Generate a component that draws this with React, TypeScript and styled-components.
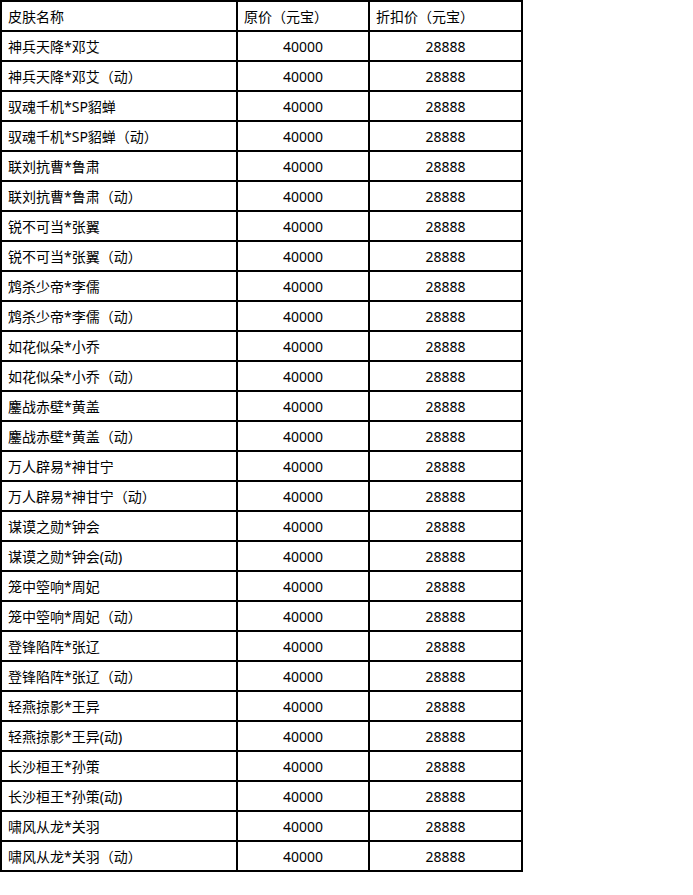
import styled, { createGlobalStyle } from "styled-components";

const GlobalStyle = createGlobalStyle`
  html, body {
    margin: 0;
    padding: 0;
    background: #ffffff;
  }
  body {
    font-family: "Noto Sans", "Noto Sans CJK SC", sans-serif;
    color: #000000;
  }
`;

const Sheet = styled.div`
  display: grid;
  grid-template-columns: 234px 130px 151px;
  grid-auto-rows: 28px;
  gap: 2px;
  padding: 2px;
  width: max-content;
  background: #000000;
`;

const Row = styled.div`
  display: contents;
`;

const Cell = styled.div<{ $center?: boolean }>`
  display: flex;
  align-items: center;
  justify-content: ${(p) => (p.$center ? "center" : "flex-start")};
  padding: 1px 6px 0;
  background: #ffffff;
  font-size: 14px;
  line-height: 1;
  white-space: nowrap;
  overflow: hidden;
`;

const skins = [
  "神兵天降*邓艾",
  "神兵天降*邓艾（动）",
  "驭魂千机*SP貂蝉",
  "驭魂千机*SP貂蝉（动）",
  "联刘抗曹*鲁肃",
  "联刘抗曹*鲁肃（动）",
  "锐不可当*张翼",
  "锐不可当*张翼（动）",
  "鸩杀少帝*李儒",
  "鸩杀少帝*李儒（动）",
  "如花似朵*小乔",
  "如花似朵*小乔（动）",
  "鏖战赤壁*黄盖",
  "鏖战赤壁*黄盖（动）",
  "万人辟易*神甘宁",
  "万人辟易*神甘宁（动）",
  "谋谟之勋*钟会",
  "谋谟之勋*钟会(动)",
  "笼中箜响*周妃",
  "笼中箜响*周妃（动）",
  "登锋陷阵*张辽",
  "登锋陷阵*张辽（动）",
  "轻燕掠影*王异",
  "轻燕掠影*王异(动)",
  "长沙桓王*孙策",
  "长沙桓王*孙策(动)",
  "啸风从龙*关羽",
  "啸风从龙*关羽（动）",
];

function App() {
  return (
    <>
      <GlobalStyle />
      <Sheet>
        <Row>
          <Cell>皮肤名称</Cell>
          <Cell>原价（元宝）</Cell>
          <Cell>折扣价（元宝）</Cell>
        </Row>
        {skins.map((name) => (
          <Row key={name}>
            <Cell>{name}</Cell>
            <Cell $center>40000</Cell>
            <Cell $center>28888</Cell>
          </Row>
        ))}
      </Sheet>
    </>
  );
}

export default App;
